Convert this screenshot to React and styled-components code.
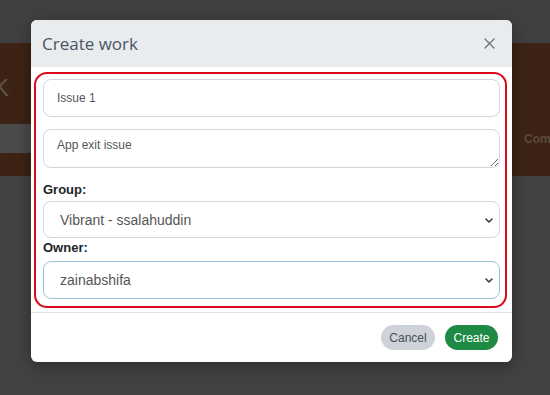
import React from 'react'
import styled, { createGlobalStyle } from 'styled-components'

const GlobalStyle = createGlobalStyle`
  html, body {
    margin: 0;
    padding: 0;
    width: 550px;
    height: 395px;
    overflow: hidden;
    font-family: "Liberation Sans", Arial, sans-serif;
  }
`

const Page = styled.div`
  position: relative;
  width: 550px;
  height: 395px;
  background-color: #424242;
  overflow: hidden;
`

const TopBar = styled.div`
  height: 43px;
  background-color: #404040;
`

const Hero = styled.div`
  height: 133px;
  background-color: #3c2315;
  display: flex;
  flex-direction: column;
`

const Brand = styled.div`
  height: 81px;
  display: flex;
  align-items: center;
  margin-left: -7px;
  padding-top: 8px;
  box-sizing: border-box;
  font-size: 24px;
  color: #5e524a;
`

const NavRow = styled.div`
  height: 29px;
  display: flex;
  align-items: center;
  white-space: nowrap;
`

const SearchStrip = styled.div`
  flex-shrink: 0;
  width: 300px;
  height: 100%;
  background-color: #4a4a4a;
`

const NavLink = styled.span`
  flex-shrink: 0;
  margin-left: 224px;
  font-size: 12px;
  font-weight: bold;
  color: #5a4a3f;
`

const Modal = styled.div`
  position: absolute;
  left: 31px;
  top: 20px;
  width: 481px;
  background-color: #fff;
  border-radius: 6px;
  box-shadow: 0 4px 16px rgba(0, 0, 0, 0.35);
  overflow: hidden;
`

const Header = styled.div`
  height: 47px;
  display: flex;
  align-items: center;
  justify-content: space-between;
  padding: 0 17px 0 11px;
  background-color: #e9ecef;
`

const Title = styled.h5`
  margin: 0;
  font-family: "Open Sans", sans-serif;
  font-size: 17px;
  font-weight: 400;
  color: #4a5561;
`

const CloseButton = styled.button`
  display: flex;
  padding: 0;
  border: 0;
  background: none;
  cursor: pointer;
`

const Body = styled.div`
  padding: 5px 5px 4px 3px;
`

const Frame = styled.div`
  border: 2px solid #d80a1c;
  border-radius: 13px;
  padding: 5px 5px 7px 7px;
  display: flex;
  flex-direction: column;
`

const TextInput = styled.input`
  box-sizing: border-box;
  width: 100%;
  height: 38px;
  padding: 0 13px;
  border: 1px solid #d3d6d9;
  border-radius: 8px;
  font-family: inherit;
  font-size: 12px;
  color: #555;
  outline: none;
`

const TextArea = styled.textarea`
  box-sizing: border-box;
  width: 100%;
  height: 39px;
  margin-top: 12px;
  padding: 8px 13px;
  border: 1px solid #d3d6d9;
  border-radius: 8px;
  font-family: inherit;
  font-size: 12px;
  color: #555;
  resize: vertical;
  outline: none;
`

const Label = styled.label`
  display: block;
  margin-top: ${p => p.$top || 0}px;
  margin-bottom: ${p => p.$bottom || 0}px;
  line-height: 20px;
  font-size: 13px;
  font-weight: bold;
  color: #212529;
`

const SelectWrap = styled.div`
  position: relative;
`

const Select = styled.select`
  box-sizing: border-box;
  width: 100%;
  height: ${p => p.$height || 38}px;
  padding: 0 30px 0 16px;
  border: 1px solid ${p => (p.$focused ? '#9cc4d8' : '#d3d6d9')};
  border-radius: 8px;
  background-color: #fff;
  appearance: none;
  font-family: inherit;
  font-size: 14px;
  color: #555;
  outline: none;
`

const Chevron = styled.svg`
  position: absolute;
  right: 7px;
  top: 50%;
  margin-top: -2px;
  pointer-events: none;
`

const Footer = styled.div`
  height: 49px;
  border-top: 1px solid #dee2e6;
  display: flex;
  align-items: center;
  justify-content: flex-end;
  gap: 10px;
  padding: 0 14px;
`

const Pill = styled.button`
  width: ${p => p.$width}px;
  height: 25px;
  padding: 0;
  border: 0;
  border-radius: 13px;
  font-family: inherit;
  font-size: 12px;
  background-color: ${p => (p.$primary ? '#1e8a43' : '#ced3da')};
  color: ${p => (p.$primary ? '#fff' : '#4a5059')};
  cursor: pointer;
`

function SelectField({ value, focused, height }) {
  return (
    <SelectWrap>
      <Select defaultValue={value} $focused={focused} $height={height}>
        <option>{value}</option>
      </Select>
      <Chevron width="8" height="5" viewBox="0 0 8 5">
        <path d="M1 1l3 3 3-3" fill="none" stroke="#343a40" strokeWidth="1.5" strokeLinecap="round" strokeLinejoin="round" />
      </Chevron>
    </SelectWrap>
  )
}

export default function App() {
  return (
    <Page>
      <GlobalStyle />
      <TopBar />
      <Hero>
        <Brand>K</Brand>
        <NavRow>
          <SearchStrip />
          <NavLink>Community</NavLink>
        </NavRow>
      </Hero>

      <Modal>
        <Header>
          <Title>Create work</Title>
          <CloseButton aria-label="Close">
            <svg width="11" height="11" viewBox="0 0 11 11">
              <path d="M1 1l9 9M10 1l-9 9" stroke="#6c757d" strokeWidth="1.4" strokeLinecap="round" />
            </svg>
          </CloseButton>
        </Header>
        <Body>
          <Frame>
            <TextInput defaultValue="Issue 1" />
            <TextArea defaultValue="App exit issue" />
            <Label $top={12} $bottom={1}>Group:</Label>
            <SelectField value="Vibrant - ssalahuddin" height={37} />
            <Label $bottom={3}>Owner:</Label>
            <SelectField value="zainabshifa" focused />
          </Frame>
        </Body>
        <Footer>
          <Pill $width={54}>Cancel</Pill>
          <Pill $primary $width={53}>Create</Pill>
        </Footer>
      </Modal>
    </Page>
  )
}
